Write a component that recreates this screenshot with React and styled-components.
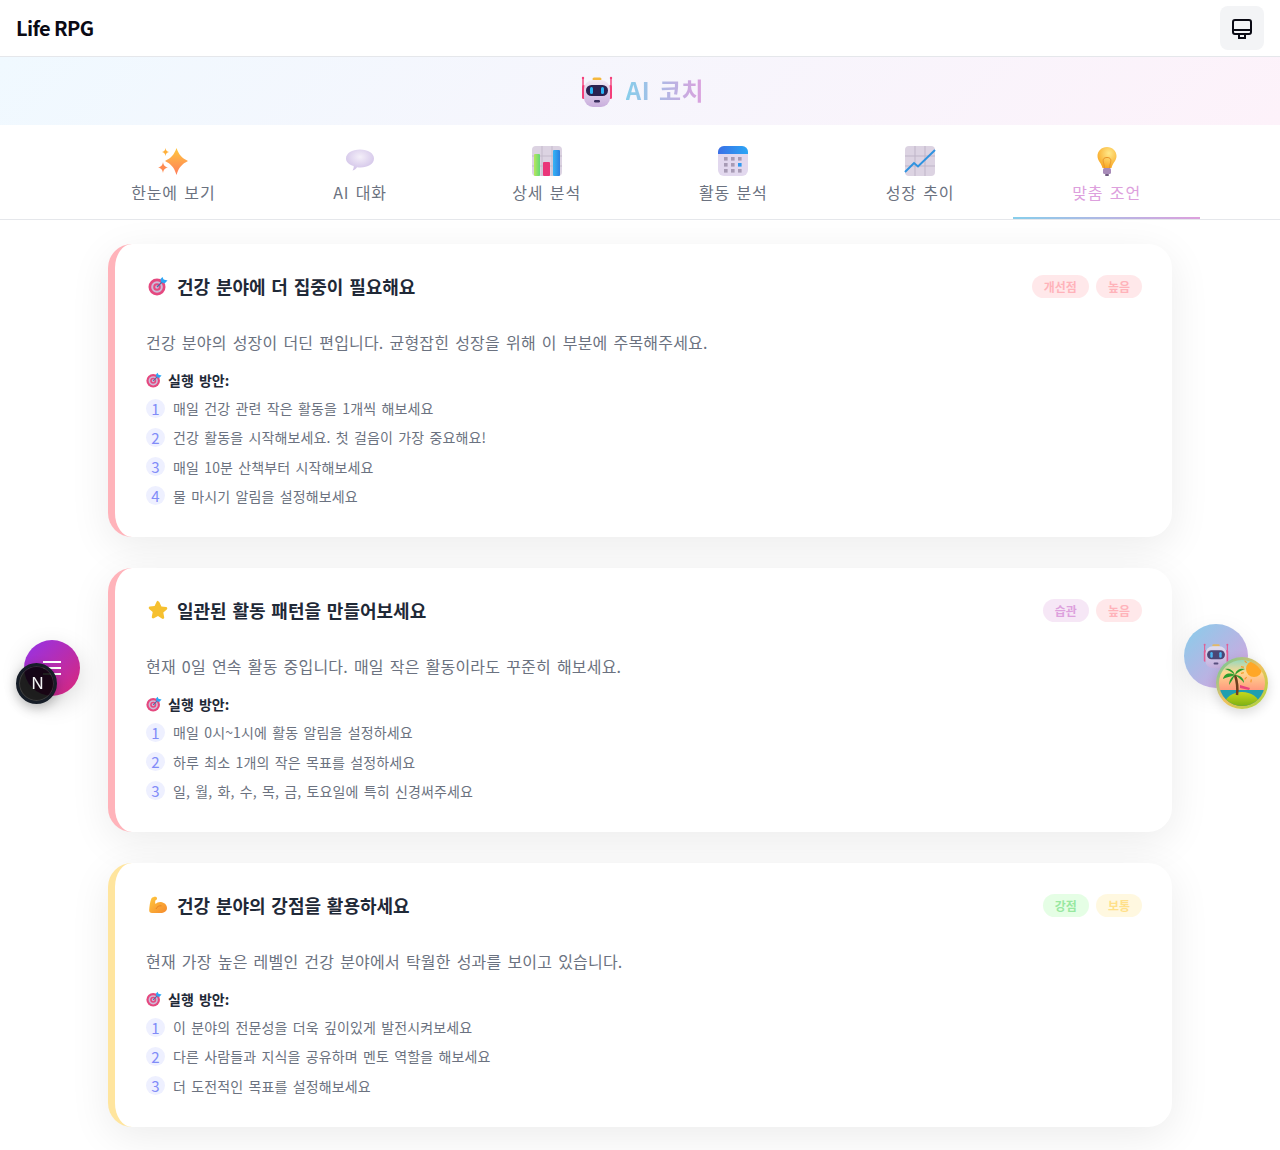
import React from 'react'
import styled, { createGlobalStyle } from 'styled-components'

const GlobalStyle = createGlobalStyle`
  html, body {
    margin: 0;
    padding: 0;
    background: #fff;
    font-family: "Noto Sans CJK KR", "Noto Sans", sans-serif;
  }
  * { box-sizing: border-box; }
`
const Header = styled.header`
  height: 57px;
  display: flex;
  align-items: center;
  justify-content: space-between;
  padding: 0 16px;
  border-bottom: 1px solid #e5e7eb;
`
const Logo = styled.h1`
  margin: 0;
  font-size: 20px;
  line-height: 28px;
  font-weight: 700;
  letter-spacing: -0.6px;
  color: #0a0a14;
`
const IconButton = styled.button`
  width: 44px;
  height: 44px;
  border: 0;
  border-radius: 8px;
  background: #f3f4f6;
  display: flex;
  align-items: center;
  justify-content: center;
  padding: 0;
`
const Banner = styled.div`
  height: 68px;
  padding-left: 5px;
  display: flex;
  align-items: center;
  justify-content: center;
  gap: 13px;
  background: linear-gradient(135deg, #f0f9ff, #fdf2fa);
  svg {
    margin-top: 2px;
  }
`
const BannerTitle = styled.h2`
  margin: -2px 0 0;
  font-size: 24px;
  line-height: 32px;
  font-weight: 700;
  letter-spacing: 0.5px;
  word-spacing: 3px;
  background: linear-gradient(90deg, #87ceeb, #dda0dd);
  -webkit-background-clip: text;
  background-clip: text;
  color: transparent;
`
const TabBar = styled.nav`
  height: 95px;
  display: flex;
  justify-content: center;
  border-bottom: 1px solid #e5e7eb;
`
const Tabs = styled.div`
  width: 1120px;
  display: grid;
  grid-template-columns: repeat(6, 1fr);
`
const Tab = styled.div`
  position: relative;
  display: flex;
  flex-direction: column;
  align-items: center;
  padding-top: 20px;
  gap: 3px;
  font-size: 16px;
  line-height: 24px;
  letter-spacing: 0.85px;
  word-spacing: 2px;
  color: ${p => (p.$active ? '#dda0dd' : '#6b7280')};
  ${p => p.$active && `
    &::after {
      content: '';
      position: absolute;
      left: 0;
      right: 0;
      bottom: 0;
      height: 2px;
      background: linear-gradient(90deg, #87ceeb, #dda0dd);
    }
  `}
`
const Content = styled.main`
  width: 1064px;
  margin: 0 auto;
  padding: 24px 0;
  display: flex;
  flex-direction: column;
  gap: 31.2px;
`
const Card = styled.article`
  background: #fff;
  border-left: 7px solid ${p => p.$accent};
  border-radius: 24px;
  padding: 25px 30px 31px 31px;
  box-shadow: 0 10px 40px rgba(0, 0, 0, 0.08);
`
const CardHead = styled.div`
  display: flex;
  align-items: center;
  justify-content: space-between;
  height: 34px;
  margin-bottom: 27px;
`
const CardTitle = styled.h3`
  margin: 0;
  display: flex;
  align-items: center;
  gap: 9px;
  padding-left: 2px;
  font-size: 18px;
  line-height: 28px;
  font-weight: 700;
  word-spacing: 1.7px;
  color: #1f2937;
`
const Badges = styled.div`
  display: flex;
  gap: 7px;
`
const Badge = styled.span`
  height: 23px;
  padding: 0 12px;
  border-radius: 999px;
  display: flex;
  align-items: center;
  font-size: 12px;
  font-weight: 700;
  color: ${p => p.$color};
  background: ${p => p.$bg};
`
const Description = styled.p`
  margin: 0 0 16px;
  font-size: 16px;
  line-height: 24px;
  letter-spacing: 0.18px;
  word-spacing: 2.3px;
  color: #6b7280;
`
const StepsTitle = styled.div`
  display: flex;
  align-items: center;
  gap: 6px;
  font-size: 14px;
  font-weight: 700;
  line-height: 20px;
  word-spacing: 2px;
  color: #1f2937;
  margin-bottom: 8px;
`
const Steps = styled.ol`
  margin: 0;
  padding: 0;
  list-style: none;
  display: flex;
  flex-direction: column;
  gap: 9.33px;
`
const Step = styled.li`
  display: flex;
  align-items: center;
  gap: 8px;
  height: 20px;
  font-size: 14px;
  letter-spacing: 0.12px;
  word-spacing: 2px;
  color: #6b7280;
`
const StepNum = styled.span`
  width: 19px;
  height: 19px;
  border-radius: 50%;
  background: #eef0ff;
  color: #818cf8;
  font-size: 15px;
  display: flex;
  align-items: center;
  justify-content: center;
`
const MenuFab = styled.div`
  position: fixed;
  left: 24px;
  top: 640px;
  width: 56px;
  height: 56px;
  border-radius: 50%;
  background: linear-gradient(135deg, #9333ea, #db2777);
  box-shadow: 0 8px 24px rgba(0, 0, 0, 0.15);
  display: flex;
  flex-direction: column;
  align-items: center;
  justify-content: center;
  gap: 4px;
  span {
    width: 18px;
    height: 2px;
    background: #fff;
  }
`
const DevBadge = styled.div`
  position: fixed;
  left: 16px;
  top: 663px;
  width: 41px;
  height: 41px;
  border-radius: 50%;
  background: rgba(0, 0, 0, 0.88);
  border: 3px solid #161d27;
  box-shadow: 0 4px 12px rgba(0, 0, 0, 0.25), inset 0 0 0 1px rgba(255, 255, 255, 0.14);
  color: #f2f2f4;
  font-family: Inter, sans-serif;
  font-size: 16px;
  font-weight: 400;
  padding: 0 0 2px 2px;
  display: flex;
  align-items: center;
  justify-content: center;
`
const CoachFab = styled.div`
  position: fixed;
  left: 1184px;
  top: 624px;
  width: 64px;
  height: 64px;
  border-radius: 50%;
  background: linear-gradient(135deg, #87ceeb, #dda0dd);
  box-shadow: 0 8px 24px rgba(0, 0, 0, 0.08);
  display: flex;
  align-items: center;
  justify-content: center;
`
const IslandFab = styled.div`
  position: fixed;
  left: 1216px;
  top: 657px;
  width: 52px;
  height: 52px;
  border-radius: 50%;
  box-shadow: 0 4px 12px rgba(0, 0, 0, 0.15);
`

function Monitor() {
  return (
    <svg width="24" height="24" viewBox="0 0 24 24" fill="none" stroke="#0a0a14" strokeWidth="2" strokeLinejoin="round">
      <rect x="3" y="4" width="18" height="14" rx="2" />
      <path d="M3 14h18M9 18v4M15 18v4M8 22h8" />
    </svg>
  )
}
function Robot({ size = 32, faded }) {
  return (
    <svg width={size} height={size} viewBox="0 0 32 32" opacity={faded ? 0.75 : 1}>
      <defs>
        <linearGradient id="robotBody" x1="0" y1="0" x2="0" y2="1">
          <stop offset="0" stopColor="#f1e9f3" />
          <stop offset="1" stopColor="#c9aedd" />
        </linearGradient>
      </defs>
      <rect x="11.5" y="1.5" width="9" height="3" rx="1.5" fill="#f5b83d" />
      <path d="M2 2v19M30 2v19" stroke="#f43f7a" strokeWidth="1.4" />
      <circle cx="2" cy="2" r="1.2" fill="#f43f7a" />
      <circle cx="30" cy="2" r="1.2" fill="#f43f7a" />
      <rect x="1" y="9" width="3" height="14" rx="1.5" fill="#f43f7a" />
      <rect x="28" y="9" width="3" height="14" rx="1.5" fill="#f43f7a" />
      <rect x="3" y="4" width="26" height="27" rx="9" fill="url(#robotBody)" />
      <rect x="5" y="9" width="22" height="11" rx="5.5" fill="#2a2150" />
      <rect x="9" y="11" width="3" height="7" rx="1.5" fill="#2ab4f5" />
      <rect x="20" y="11" width="3" height="7" rx="1.5" fill="#2ab4f5" />
      <rect x="13" y="24" width="6" height="2.5" rx="1.2" fill="#3a2f5f" />
    </svg>
  )
}
function Sparkles() {
  return (
    <svg width="32" height="32" viewBox="0 0 32 32">
      <defs>
        <linearGradient id="sparkleFill" x1="0" y1="0" x2="0" y2="1">
          <stop offset="0" stopColor="#ffc83d" />
          <stop offset="1" stopColor="#ff7d5c" />
        </linearGradient>
      </defs>
      <path d="M19.5 3C22 10 25 13 31 16 25 19 22 22 19.5 30 17 22 14 19 8 16 14 13 17 10 19.5 3z" fill="url(#sparkleFill)" />
      <path d="M8.500 3c.5 2.600 1.300 3.400 3.500 4-2.200.6-3 1.400-3.500 4-.5-2.600-1.300-3.400-3.500-4 2.200-.6 3-1.400 3.500-4z" fill="#ffb03b" />
      <path d="M6 17c.6 3.500 1.700 4.700 5 5.500-3.300.8-4.400 2-5 5.500-.6-3.500-1.700-4.700-5-5.500 3.300-.8 4.400-2 5-5.500z" fill="#ff8a50" />
    </svg>
  )
}
function Bubble() {
  return (
    <svg width="32" height="32" viewBox="0 0 32 32">
      <defs>
        <radialGradient id="bubbleFill" cx="0.5" cy="0.35" r="0.7">
          <stop offset="0" stopColor="#f4eff9" />
          <stop offset="1" stopColor="#cdbde6" />
        </radialGradient>
      </defs>
      <path d="M16 4.500c8 0 14 3.800 14 9 0 5.400-6 9-13.500 9-1.200 0-2.300-.1-3.400-.3-1 1.400-2.400 2.600-4.600 3.300 1-1.500 1.300-3 1.200-4.500C5 19.500 2 17 2 13.500c0-5.200 6-9 14-9z" fill="url(#bubbleFill)" />
    </svg>
  )
}
function BarChart() {
  return (
    <svg width="32" height="32" viewBox="0 0 32 32">
      <defs>
        <linearGradient id="barGreen" x1="0" y1="0" x2="1" y2="0">
          <stop offset="0" stopColor="#b8e65c" />
          <stop offset="1" stopColor="#62d977" />
        </linearGradient>
        <linearGradient id="barBlue" x1="0" y1="0" x2="1" y2="0">
          <stop offset="0" stopColor="#35b4f5" />
          <stop offset="1" stopColor="#2a7fe0" />
        </linearGradient>
      </defs>
      <rect x="1" y="1" width="30" height="30" rx="4" fill="#dcd3e2" />
      <path d="M11 1v30M21 1v30M1 11h30M1 21h30" stroke="#c4bacb" strokeWidth="1" />
      <rect x="3" y="9" width="6" height="22" rx="1" fill="url(#barGreen)" />
      <rect x="12" y="17" width="7" height="14" rx="1" fill="#ea3579" />
      <rect x="22" y="5" width="7" height="26" rx="1" fill="url(#barBlue)" />
    </svg>
  )
}
function Calendar() {
  const cells = []
  for (let r = 0; r < 3; r++) {
    for (let c = 0; c < 3; c++) {
      cells.push(
        <rect key={r + '-' + c} x={7 + c * 7} y={12 + r * 6} width="3.600" height="3.600" fill={r === 1 && c === 2 ? '#2d98ef' : '#a79bb5'} />
      )
    }
  }
  return (
    <svg width="32" height="32" viewBox="0 0 32 32">
      <defs>
        <linearGradient id="calTop" x1="0" y1="0" x2="1" y2="0">
          <stop offset="0" stopColor="#3a6fe6" />
          <stop offset="1" stopColor="#2ba6f5" />
        </linearGradient>
      </defs>
      <rect x="1" y="1" width="30" height="30" rx="6" fill="#e2d8ee" />
      <path d="M1 9V7a6 6 0 0 1 6-6h18a6 6 0 0 1 6 6v2z" fill="url(#calTop)" />
      {cells}
    </svg>
  )
}
function LineChart() {
  return (
    <svg width="32" height="32" viewBox="0 0 32 32">
      <rect x="1" y="1" width="30" height="30" rx="4" fill="#dcd3e2" />
      <path d="M11 1v30M21 1v30M1 11h30M1 21h30" stroke="#bfb5c8" strokeWidth="1" />
      <path d="M1 27l9-9 4 3.500L31 5" fill="none" stroke="#2f93e0" strokeWidth="2" />
    </svg>
  )
}
function Bulb() {
  return (
    <svg width="32" height="32" viewBox="0 0 32 32">
      <defs>
        <radialGradient id="bulbFill" cx="0.6" cy="0.3" r="0.7">
          <stop offset="0" stopColor="#ffe98a" />
          <stop offset="1" stopColor="#f9a825" />
        </radialGradient>
      </defs>
      <path d="M16 2c5.500 0 9.500 4 9.500 9 0 5-4 7-5 12h-9c-1-5-5-7-5-12 0-5 4-9 9.500-9z" fill="url(#bulbFill)" />
      <path d="M13.500 23c-.5-5-2-7-1-9 1-2 6-2 7 0s-.5 4-1 9" fill="none" stroke="#e8952a" strokeWidth="1" />
      <rect x="12" y="23" width="8" height="6" rx="1.500" fill="#a78bb8" />
      <rect x="14" y="29" width="4" height="2" rx="1" fill="#6f5b80" />
    </svg>
  )
}
function Target({ size }) {
  return (
    <svg width={size} height={size} viewBox="0 0 20 20">
      <circle cx="9" cy="11" r="8.500" fill="#e5487f" />
      <circle cx="9" cy="11" r="5.800" fill="#cdbbd8" />
      <circle cx="9" cy="11" r="3.800" fill="#e5487f" />
      <circle cx="9" cy="11" r="1.800" fill="#cdbbd8" />
      <path d="M9 11l7-7" stroke="#4f6aa8" strokeWidth="1.300" />
      <path d="M14.500 1l1 2.500 4 1-3 3-3.500-1.500-.5-3z" fill="#2ba6f5" />
    </svg>
  )
}
function Star({ size }) {
  return (
    <svg width={size} height={size} viewBox="0 0 20 20">
      <path d="M10 1.200c.7 0 1.100.4 1.400 1l2 4.300 4.700.6c1.200.2 1.600 1.500.7 2.300l-3.500 3.200.9 4.700c.2 1.200-1 2-2 1.500L10 16l-4.200 2.300c-1 .5-2.200-.3-2-1.500l.9-4.700-3.500-3.200c-.9-.8-.5-2.100.7-2.300l4.700-.6 2-4.300c.3-.6.7-1 1.400-1z" fill="#f6c02f" />
    </svg>
  )
}
function Muscle({ size }) {
  return (
    <svg width={size} height={size} viewBox="0 0 20 20">
      <defs>
        <linearGradient id="armFill" x1="0" y1="0" x2="1" y2="1">
          <stop offset="0" stopColor="#ffc83d" />
          <stop offset="1" stopColor="#f58a2e" />
        </linearGradient>
      </defs>
      <path d="M3.500 3.200C4.800 2 7 1.400 8.200 2c1 .6 1.100 2 .3 2.800L7.300 5.400c-.3 1.200-.2 2.500.2 3.600 1.300-1.500 3.500-2.300 5.500-2 3 .4 6 2.600 6 6 0 3.300-3 5-6.500 5H4c-1.800 0-3-1.200-2.800-3 .2-3.500.8-8.500 2.300-11.800z" fill="url(#armFill)" />
      <path d="M8 14c1-2.500 3-3.500 5.500-3.200" fill="none" stroke="#e07a22" strokeWidth="0.800" />
    </svg>
  )
}
function Island() {
  const rays = []
  for (let a = 100; a <= 260; a += 32) {
    const rad = (a * Math.PI) / 180
    rays.push(
      <line
        key={a}
        x1={37 + 9.500 * Math.cos(rad)}
        y1={13 + 9.500 * Math.sin(rad)}
        x2={37 + 12.500 * Math.cos(rad)}
        y2={13 + 12.500 * Math.sin(rad)}
        stroke="#f59a2e"
        strokeWidth="1.200"
      />
    )
  }
  return (
    <svg width="52" height="52" viewBox="0 0 52 52">
      <defs>
        <linearGradient id="islandSky" x1="0" y1="0" x2="0" y2="1">
          <stop offset="0" stopColor="#7fd8c8" />
          <stop offset="0.3" stopColor="#ffd890" />
          <stop offset="0.7" stopColor="#ff8f7a" />
        </linearGradient>
        <linearGradient id="islandRing" x1="0" y1="0" x2="1" y2="1">
          <stop offset="0" stopColor="#5fc9a0" />
          <stop offset="0.5" stopColor="#f0c060" />
          <stop offset="1" stopColor="#9fd83a" />
        </linearGradient>
        <linearGradient id="islandHill" x1="0" y1="0" x2="0" y2="1">
          <stop offset="0" stopColor="#c6d81a" />
          <stop offset="1" stopColor="#6fa812" />
        </linearGradient>
        <clipPath id="islandClip">
          <circle cx="26" cy="26" r="23" />
        </clipPath>
      </defs>
      <circle cx="26" cy="26" r="26" fill="url(#islandRing)" />
      <g clipPath="url(#islandClip)">
        <rect width="52" height="52" fill="url(#islandSky)" />
        <circle cx="38" cy="12" r="8" fill="#ffa726" />
        {rays}
        <rect y="33" width="52" height="19" fill="#1e9fb0" />
        <path d="M6 52c2-11 10-17 20-17s18 6 20 17z" fill="url(#islandHill)" />
        <path d="M21 38c1-8 0-14-2-20" fill="none" stroke="#6d3f1e" strokeWidth="2.500" />
        <path d="M19 18c-6-3-11-1-12 4 4-2 7-2 12-4zM19 18c-2-6-7-7-10-6 3 1 7 3 10 6zM19 18c1-6 6-7 10-6-3 1-7 3-10 6zM19 18c6 0 9 4 9 8-2-3-6-6-9-8zM19 18c-4 2-6 6-6 10 2-3 4-6 6-10z" fill="#2f9e2f" />
        <path d="M24 28l10 3-1 2-9-2z" fill="#e8447c" />
      </g>
    </svg>
  )
}

const TABS = [
  { label: '한눈에 보기', Icon: Sparkles },
  { label: 'AI 대화', Icon: Bubble },
  { label: '상세 분석', Icon: BarChart },
  { label: '활동 분석', Icon: Calendar },
  { label: '성장 추이', Icon: LineChart },
  { label: '맞춤 조언', Icon: Bulb, active: true },
]
const PINK = ['#ffb3ba', 'rgba(255, 179, 186, 0.3)']
const PLUM = ['#dda0dd', 'rgba(221, 160, 221, 0.25)']
const GREEN = ['#98e8a0', 'rgba(152, 251, 152, 0.25)']
const YELLOW = ['#ffe08a', 'rgba(255, 234, 167, 0.35)']
const CARDS = [
  {
    accent: '#ffb3ba',
    Icon: Target,
    title: '건강 분야에 더 집중이 필요해요',
    badges: [['개선점', PINK], ['높음', PINK]],
    desc: '건강 분야의 성장이 더딘 편입니다. 균형잡힌 성장을 위해 이 부분에 주목해주세요.',
    steps: ['매일 건강 관련 작은 활동을 1개씩 해보세요', '건강 활동을 시작해보세요. 첫 걸음이 가장 중요해요!', '매일 10분 산책부터 시작해보세요', '물 마시기 알림을 설정해보세요'],
  },
  {
    accent: '#ffb3ba',
    Icon: Star,
    title: '일관된 활동 패턴을 만들어보세요',
    badges: [['습관', PLUM], ['높음', PINK]],
    desc: '현재 0일 연속 활동 중입니다. 매일 작은 활동이라도 꾸준히 해보세요.',
    steps: ['매일 0시~1시에 활동 알림을 설정하세요', '하루 최소 1개의 작은 목표를 설정하세요', '일, 월, 화, 수, 목, 금, 토요일에 특히 신경써주세요'],
  },
  {
    accent: '#ffe59e',
    Icon: Muscle,
    title: '건강 분야의 강점을 활용하세요',
    badges: [['강점', GREEN], ['보통', YELLOW]],
    desc: '현재 가장 높은 레벨인 건강 분야에서 탁월한 성과를 보이고 있습니다.',
    steps: ['이 분야의 전문성을 더욱 깊이있게 발전시켜보세요', '다른 사람들과 지식을 공유하며 멘토 역할을 해보세요', '더 도전적인 목표를 설정해보세요'],
  },
]

export default function App() {
  return (
    <>
      <GlobalStyle />
      <Header>
        <Logo>Life RPG</Logo>
        <IconButton><Monitor /></IconButton>
      </Header>
      <Banner>
        <Robot />
        <BannerTitle>AI 코치</BannerTitle>
      </Banner>
      <TabBar>
        <Tabs>
          {TABS.map(({ label, Icon, active }) => (
            <Tab key={label} $active={active}>
              <Icon />
              {label}
            </Tab>
          ))}
        </Tabs>
      </TabBar>
      <Content>
        {CARDS.map(({ accent, Icon, title, badges, desc, steps }) => (
          <Card key={title} $accent={accent}>
            <CardHead>
              <CardTitle><Icon size={20} />{title}</CardTitle>
              <Badges>
                {badges.map(([text, [color, bg]]) => (
                  <Badge key={text} $color={color} $bg={bg}>{text}</Badge>
                ))}
              </Badges>
            </CardHead>
            <Description>{desc}</Description>
            <StepsTitle><Target size={16} />실행 방안:</StepsTitle>
            <Steps>
              {steps.map((step, i) => (
                <Step key={step}><StepNum>{i + 1}</StepNum>{step}</Step>
              ))}
            </Steps>
          </Card>
        ))}
      </Content>
      <MenuFab><span /><span /><span /></MenuFab>
      <DevBadge>N</DevBadge>
      <CoachFab><Robot size={26} faded /></CoachFab>
      <IslandFab><Island /></IslandFab>
    </>
  )
}
